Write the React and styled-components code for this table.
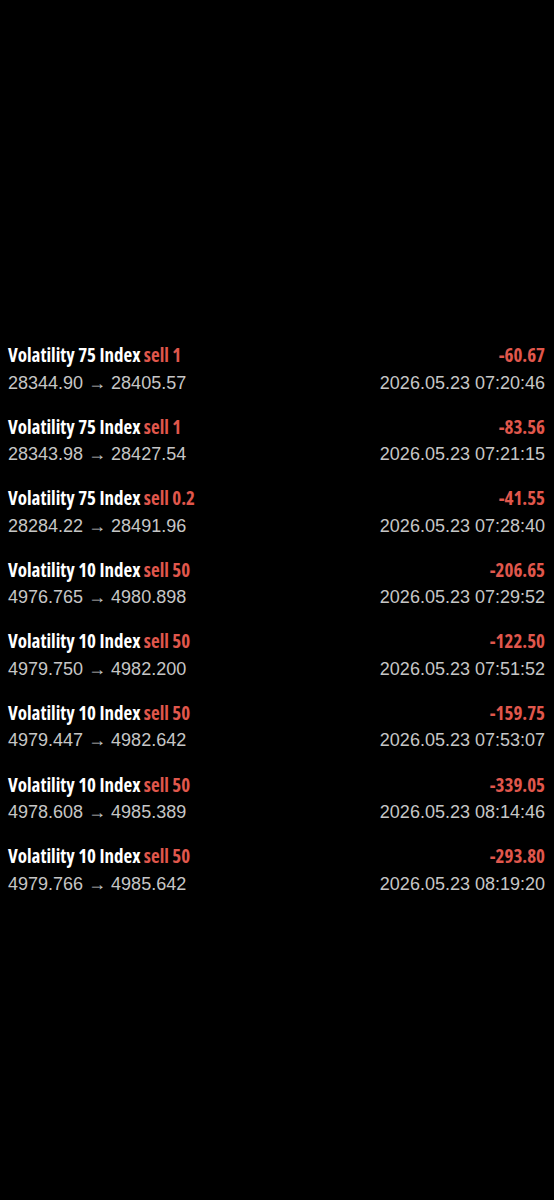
import React from "react";
import styled, { createGlobalStyle } from "styled-components";

const GlobalStyle = createGlobalStyle`
  html, body {
    margin: 0;
    padding: 0;
    background: #000;
  }
  body {
    font-family: "Liberation Sans", Arial, sans-serif;
  }
`;

const Page = styled.div`
  width: 554px;
  height: 1200px;
  background: #000;
  padding-top: 341px;
  box-sizing: border-box;
`;

const List = styled.div`
  display: flex;
  flex-direction: column;
  padding: 0 9px 0 8px;
`;

const Row = styled.div`
  display: grid;
  grid-template-columns: 1fr auto;
  grid-template-rows: 28px 28px;
  height: 71.6px;
  align-items: center;
`;

const Condensed = styled.div`
  font-family: "Open Sans", sans-serif;
  font-stretch: 75%;
  font-weight: 700;
  font-size: 19px;
  white-space: nowrap;
`;

const Title = styled(Condensed)`
  color: #fff;
`;

const Side = styled.span`
  color: #e0574c;
`;

const Profit = styled(Condensed)`
  color: #e0574c;
  text-align: right;
`;

const Prices = styled.div`
  font-size: 18px;
  color: #c6c6c6;
  white-space: nowrap;
`;

const Time = styled(Prices)`
  text-align: right;
`;

const trades = [
  { sym: "Volatility 75 Index", vol: "1", open: "28344.90", close: "28405.57", profit: "-60.67", time: "2026.05.23 07:20:46" },
  { sym: "Volatility 75 Index", vol: "1", open: "28343.98", close: "28427.54", profit: "-83.56", time: "2026.05.23 07:21:15" },
  { sym: "Volatility 75 Index", vol: "0.2", open: "28284.22", close: "28491.96", profit: "-41.55", time: "2026.05.23 07:28:40" },
  { sym: "Volatility 10 Index", vol: "50", open: "4976.765", close: "4980.898", profit: "-206.65", time: "2026.05.23 07:29:52" },
  { sym: "Volatility 10 Index", vol: "50", open: "4979.750", close: "4982.200", profit: "-122.50", time: "2026.05.23 07:51:52" },
  { sym: "Volatility 10 Index", vol: "50", open: "4979.447", close: "4982.642", profit: "-159.75", time: "2026.05.23 07:53:07" },
  { sym: "Volatility 10 Index", vol: "50", open: "4978.608", close: "4985.389", profit: "-339.05", time: "2026.05.23 08:14:46" },
  { sym: "Volatility 10 Index", vol: "50", open: "4979.766", close: "4985.642", profit: "-293.80", time: "2026.05.23 08:19:20" },
];

export default function App() {
  return (
    <>
      <GlobalStyle />
      <Page>
        <List>
          {trades.map((t, i) => (
            <Row key={i}>
              <Title>
                {t.sym} <Side>sell {t.vol}</Side>
              </Title>
              <Profit>{t.profit}</Profit>
              <Prices>
                {t.open} → {t.close}
              </Prices>
              <Time>{t.time}</Time>
            </Row>
          ))}
        </List>
      </Page>
    </>
  );
}
